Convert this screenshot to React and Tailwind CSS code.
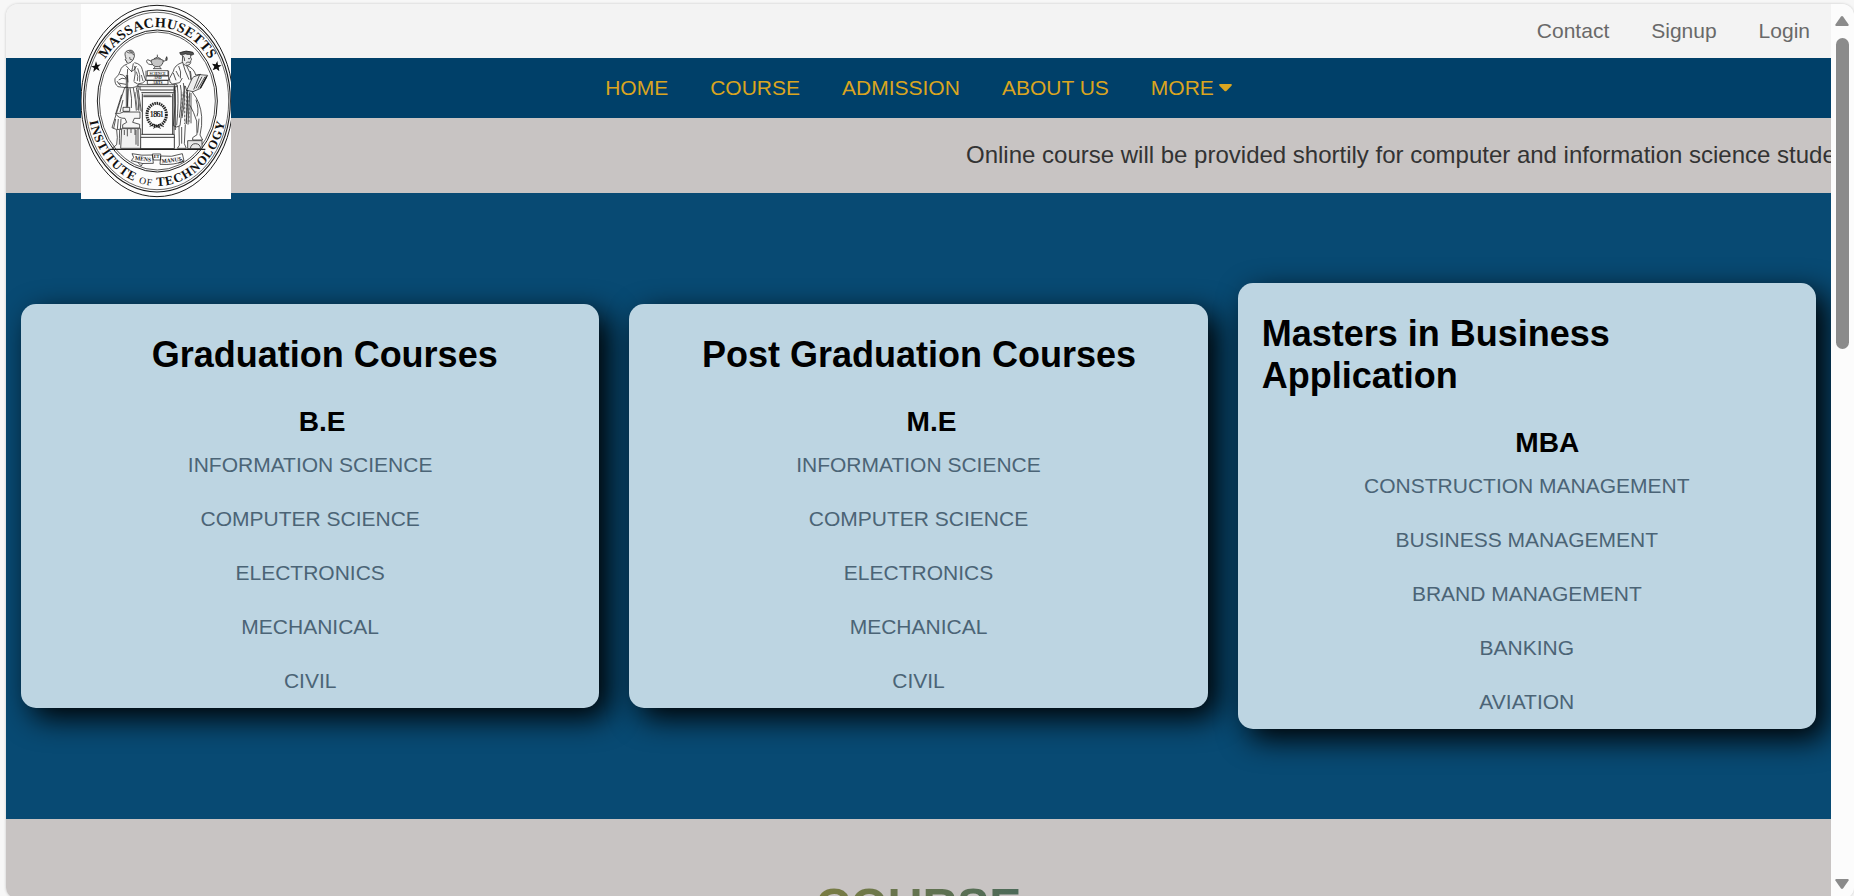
import React from "react";

const TOP_LINKS = ["Contact", "Signup", "Login"];
const NAV_LINKS = ["HOME", "COURSE", "ADMISSION", "ABOUT US"];

const CARDS = [
  {
    title: "Graduation Courses",
    titleClass: "text-center pl-[29px]",
    degree: "B.E",
    degreeClass: "pl-[24px]",
    items: ["INFORMATION SCIENCE", "COMPUTER SCIENCE", "ELECTRONICS", "MECHANICAL", "CIVIL"],
  },
  {
    title: "Post Graduation Courses",
    titleClass: "text-center pl-px",
    degree: "M.E",
    degreeClass: "pl-[26px]",
    items: ["INFORMATION SCIENCE", "COMPUTER SCIENCE", "ELECTRONICS", "MECHANICAL", "CIVIL"],
  },
  {
    title: "Masters in Business Application",
    titleClass: "pl-[24px] pr-[120px]",
    degree: "MBA",
    degreeClass: "pl-[41px]",
    items: ["CONSTRUCTION MANAGEMENT", "BUSINESS MANAGEMENT", "BRAND MANAGEMENT", "BANKING", "AVIATION"],
  },
];

function Seal() {
  return (
    <svg viewBox="243 12 450 585" className="block h-[195px] w-[150px] bg-[#fdfdfd]" fill="none" stroke="#1c1c1c" strokeWidth="2">
      <defs>
        <path id="arc-top" d="M 286 260 A 190 224 0 0 1 658 260" />
        <path id="arc-bottom" d="M 268 362 A 209 250 0 0 0 676 362" />
      </defs>
      <ellipse cx="471" cy="303" rx="228" ry="287" strokeWidth="3" />
      <ellipse cx="471" cy="303" rx="220" ry="273" strokeWidth="3.4" />
      <ellipse cx="471" cy="303" rx="215" ry="266" strokeWidth="2" />
      <ellipse cx="472" cy="303" rx="180" ry="213" strokeWidth="3" />
      <ellipse cx="472" cy="303" rx="174" ry="207" strokeWidth="2.2" />
      <g fill="#111" stroke="none" fontFamily="'Liberation Serif', serif" fontWeight="bold">
        <text fontSize="42">
          <textPath href="#arc-top" startOffset="88" textLength="384" lengthAdjust="spacing">MASSACHUSETTS</textPath>
        </text>
        <text fontSize="38">
          <textPath href="#arc-bottom" startOffset="2" textLength="606" lengthAdjust="spacing">
            INSTITUTE <tspan fontSize="29" fontWeight="normal">OF</tspan> TECHNOLOGY
          </textPath>
        </text>
        <path d="M288 184 l4 11 11 -2 -9 8 5 12 -10 -6 -9 9 2 -12 -9 -5 11 -2z" />
        <path d="M652 183 l2 12 11 1 -9 6 2 12 -9 -8 -11 5 5 -11 -7 -9 11 2z" />
      </g>

      {/* lamp on the books */}
      <g strokeWidth="2.2">
        <path d="M453 181 q18 -10 37 0 q-1 16 -14 19 h-9 q-12 -3 -14 -19z" fill="#c5c5c5" />
        <path d="M462 176 q10 -9 20 0 M472 171 v-7 M490 184 q8 2 10 -12 M453 184 q-14 -10 -13 1 q2 9 17 9 M466 201 l-6 5 h24 l-6 -5 M500 182 q-4 -7 0 -12 q4 7 0 12" />
        <path d="M442 212 h62 v15 h-62z M438 228 h68 v13 h-68z M442 241 h62 v12 h-62z M438 212 v16 M506 212 v16" />
      </g>
      <g fill="#222" stroke="none" fontFamily="'Liberation Serif', serif" fontWeight="bold" textAnchor="middle">
        <text x="473" y="224" fontSize="11">SCIENCE</text>
        <text x="473" y="238" fontSize="11">AND</text>
        <text x="473" y="251" fontSize="11">ARTS</text>
      </g>

      {/* pedestal */}
      <path d="M414 254 h117 v6 h-117z" fill="#eee" />
      <path d="M420 260 v10 h105 v-10 M424 278 h98 M427 281 v122 M518 281 v122 M430 290 h85 M424 403 h99 v43 h-102 v-34 h102" strokeWidth="2.6" />
      <path d="M522 262 v140 M526 270 v120 M430 286 h82" strokeWidth="3.2" stroke="#555" />
      <ellipse cx="470" cy="344" rx="29" ry="34" strokeWidth="9" strokeDasharray="4.5 2.2" stroke="#262626" />
      <path d="M449 379 l14 -6 7 6 8 -6 13 7 M460 385 l10 -6 12 6" strokeWidth="3" />
      <rect x="448" y="331" width="45" height="24" fill="#fdfdfd" stroke="none" />
      <text x="470.5" y="351" fontSize="24" fill="#000" stroke="#000" strokeWidth=".6" textAnchor="middle" textLength="42" fontFamily="'Liberation Serif', serif">1861</text>

      {/* craftsman with hammer and anvil */}
      <g strokeWidth="2.2">
        <path d="M376 169 q-4 -14 7 -17 q15 -5 19 7 q4 10 -3 21 q-5 8 -14 10 q-6 0 -6 -8 l-4 -2 3 -5z" fill="#e0e0e0" />
        <path d="M380 156 q6 5 18 2 M385 151 q5 8 15 5 M391 150 q3 13 12 15 M389 171 q-2 9 8 9" strokeWidth="3" stroke="#666" />
        <path d="M382 192 q-18 6 -21 20 q-3 13 -16 24 q-2 16 9 24 l24 3 M403 188 q21 4 24 21 q5 20 10 32 q-6 10 -24 11 l-12 -7 M378 197 q11 13 18 19 M400 190 q-2 12 -5 24 q10 -3 14 -16 M404 198 q4 24 -2 45 M383 207 q-3 18 1 40 M359 223 q12 -2 20 12 M356 240 q9 -9 23 -3 M354 249 l24 4" />
        <path d="M413 205 q9 18 6 40 M409 215 q7 14 3 28 M351 243 q4 10 12 14 M424 225 l5 18" stroke="#666" strokeWidth="3" />
        <path d="M375 261 q24 6 38 -4 l11 78 M374 263 q-13 39 -38 120 q14 10 29 4 M385 265 l-3 54 M390 264 q7 32 4 60 M400 264 q7 34 9 68 M409 262 q8 40 7 70 M365 284 l-17 54 M369 300 l-9 36 M347 357 l-6 28 M355 357 l-3 30 M363 357 l-2 32" />
        <path d="M412 270 l9 62 M405 276 l7 54" stroke="#777" strokeWidth="3" />
        <path d="M379 225 v97 M383 225 v97 M369 322 h20 v12 h-20z" fill="#eee" />
        <path d="M346 340 q15 2 24 -4 h50 v19 h-17 l-5 12 21 6 v11 h-51 v-10 l12 -7 -5 -12 q-20 1 -29 -15z" fill="#f5f5f5" />
        <path d="M365 386 h57 v59 h-60z" fill="#f0f0f0" />
        <path d="M350 390 q4 23 0 44 l-11 9 v5 h23 M359 390 q-1 30 -1 44 M373 390 v15 M382 387 v22 M393 387 v12 M405 387 v18 M414 387 v51 M408 390 v44" />
      </g>

      {/* scholar with book */}
      <g strokeWidth="2.2">
        <path d="M539 158 q19 -9 40 -1 l2 6 -8 3 q-18 -8 -30 -1z" fill="#555" />
        <path d="M548 165 l-1 20 q4 13 15 11 q12 -2 10 -14 l4 -4 -4 -4 v-9" fill="#eee" />
        <path d="M549 168 q5 4 5 15 M557 190 q6 -6 13 -3 M564 176 h7" strokeWidth="3" stroke="#555" />
        <path d="M548 187 q-25 8 -28 27 l-12 22 q0 14 10 16 l21 -4 8 -14 M560 196 q23 10 27 29 l16 -2 M549 191 l7 22 11 26 M536 198 q9 17 5 37 M528 213 l9 17 M560 198 q12 18 14 44 M520 219 l8 22 M571 213 q3 10 2 26" />
        <path d="M582 230 l17 -6 24 2 -21 39 -23 10 -19 -4 17 -37z M599 224 l-18 45 M615 230 l-21 36 M606 230 l-18 35" fill="#ededed" />
        <path d="M620 229 l-19 35" strokeWidth="4" />
        <path d="M523 254 q6 62 -3 123 q10 8 20 0 l14 -120 M532 256 q5 48 -2 120 M541 255 q7 28 -3 98 M550 249 q8 42 -4 105 M556 258 q12 26 2 110 M563 270 l-4 102 M569 277 l-5 97 M573 279 v91" />
        <path d="M554 261 v112 M560 276 v96 M567 284 v87 M546 278 v72" stroke="#555" strokeWidth="4" strokeDasharray="2 2" />
        <path d="M577 276 q25 31 28 74 q2 26 -5 55 l8 15 h-30 v-7 l13 -9 -1 -41 q-9 -28 -20 -47 M588 299 q10 30 3 50 M597 356 l-4 42 M537 379 l1 57 -6 9 h27 l-6 -14 3 -58 M545 381 v50" />
        <path d="M563 422 h43 v24 h-43z M571 445 q3 -14 15 -14 q14 0 16 14" fill="#e8e8e8" />
      </g>
      <path d="M328 448 h288" strokeWidth="4" />

      {/* motto ribbon */}
      <path d="M396 461 q29 7 61 4 l3 25 q-32 5 -66 -8 l7 -10z M457 462 h25 v18 h-22z M482 468 q33 5 65 -7 l5 22 q-29 13 -72 10z M414 488 l10 10 4 -8 M535 489 l16 -5 -8 -7" fill="#fdfdfd" strokeWidth="2.2" />
      <g fill="#111" stroke="none" fontFamily="'Liberation Serif', serif" fontWeight="bold">
        <text x="404" y="480" fontSize="18" textLength="49" lengthAdjust="spacingAndGlyphs" transform="rotate(6 404 480)">MENS</text>
        <text x="461" y="475" fontSize="13">ET</text>
        <text x="486" y="490" fontSize="18" textLength="59" lengthAdjust="spacingAndGlyphs" transform="rotate(-7 486 490)">MANUS</text>
      </g>
    </svg>
  );
}

function CourseCard({ card }) {
  return (
    <article className="flex-1 rounded-[15px] bg-[#bdd5e2] pt-[30px] shadow-[10px_10px_30px_#000]">
      <h2 className={`mb-[29px] text-[36px] font-bold leading-[42px] text-black ${card.titleClass}`}>{card.title}</h2>
      <h3 className={`text-center text-[28.08px] font-bold leading-[33px] text-black ${card.degreeClass}`}>{card.degree}</h3>
      <ul className="text-center text-[21px] leading-[54px] text-[#4b6476]">
        {card.items.map((item) => (
          <li key={item}>{item}</li>
        ))}
      </ul>
    </article>
  );
}

function Scrollbar() {
  return (
    <div className="flex w-[23px] shrink-0 flex-col items-center bg-[#fcfcfc] pr-px pt-3">
      <svg viewBox="0 0 14 10" className="h-[10px] w-[14px]" fill="#8b8b8b">
        <path d="M5.8 .8 Q7 -.6 8.2 .8 L13.6 8.4 Q14 10 12.8 10 H1.2 Q0 10 .4 8.4Z" />
      </svg>
      <div className="mt-3 h-[311px] w-[13px] rounded-full bg-[#8b8b8b]" />
      <svg viewBox="0 0 14 10" className="mt-[530px] h-[10px] w-[14px]" fill="#8b8b8b">
        <path d="M5.8 9.2 Q7 10.6 8.2 9.2 L13.6 1.6 Q14 0 12.8 0 H1.2 Q0 0 .4 1.6Z" />
      </svg>
    </div>
  );
}

export default function App() {
  return (
    <div className="h-[896px] overflow-hidden bg-[#f7f7f7] pl-[6px] pt-[4px] font-['Liberation_Sans',Arial,sans-serif]">
      <div className="flex h-[895px] overflow-hidden rounded-[12px] shadow-[0_0_3px_rgba(0,0,0,0.2)]">
        <div className="relative flex min-w-0 flex-1 flex-col overflow-hidden">
          <div className="flex h-[54px] shrink-0 items-center justify-end gap-[42px] bg-[#f3f3f3] pr-[21px] text-[21px] text-[#696969]">
            {TOP_LINKS.map((link) => (
              <a key={link}>{link}</a>
            ))}
          </div>
          <nav className="flex h-[60px] shrink-0 items-center justify-center gap-[42px] bg-[#004069] text-[21px] text-[#daa520]">
            {NAV_LINKS.map((link) => (
              <a key={link}>{link}</a>
            ))}
            <a className="flex items-center gap-[5px]">
              MORE
              <svg viewBox="0 0 13 8" className="h-[8px] w-[13px]" fill="currentColor">
                <path d="M1 0 H12 Q13.4 .4 12.5 1.7 L7.4 6.9 Q6.5 7.6 5.6 6.9 L.5 1.7 Q-.4 .4 1 0Z" />
              </svg>
            </a>
          </nav>
          <div className="flex h-[75px] shrink-0 items-center overflow-hidden whitespace-nowrap bg-[#c8c4c3] pb-[2px] pl-[960px] text-[24px] text-[#333]">
            Online course will be provided shortily for computer and information science students
          </div>
          <main className="flex h-[626px] shrink-0 items-center gap-[30px] overflow-hidden bg-[#084a73] px-[15px]">
            {CARDS.map((card) => (
              <CourseCard key={card.title} card={card} />
            ))}
          </main>
          <section className="flex flex-1 justify-center overflow-hidden bg-[#c8c4c3] pt-[59px]">
            <h1 className="h-[55px] bg-linear-to-r from-[#7b7d42] to-[#4c6a59] bg-clip-text text-[48px] font-bold leading-[55px] text-transparent">COURSE</h1>
          </section>
          <div className="absolute left-[75px] top-0">
            <Seal />
          </div>
        </div>
        <Scrollbar />
      </div>
    </div>
  );
}
